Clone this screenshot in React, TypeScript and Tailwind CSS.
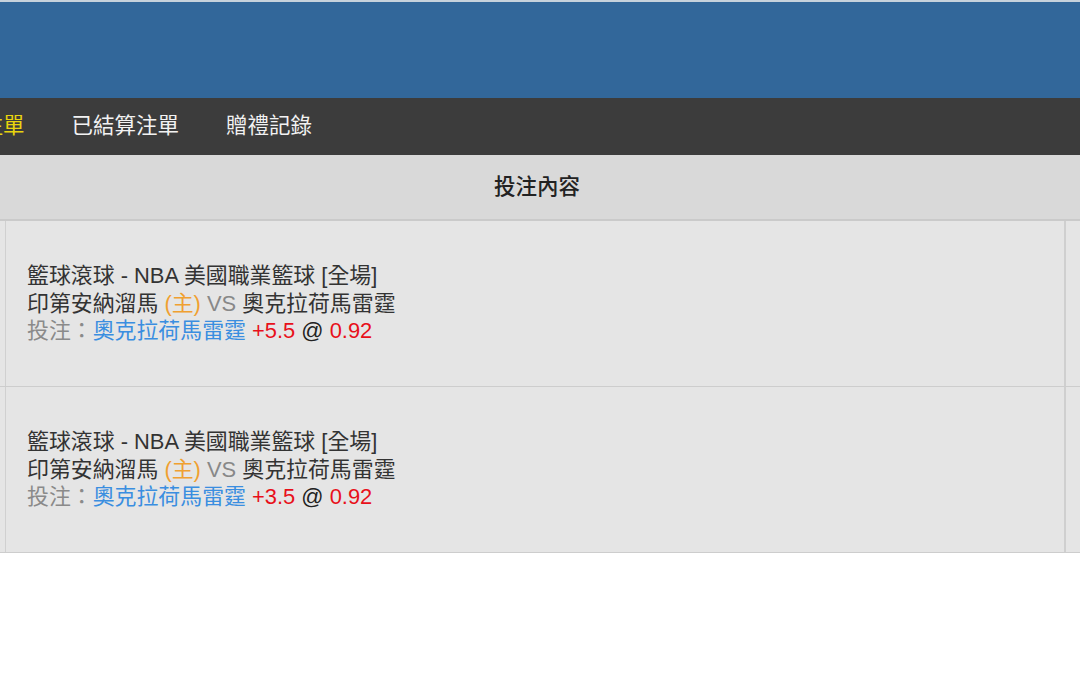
const font = { fontFamily: '"Liberation Sans", "Noto Sans CJK TC", sans-serif' };

const bets = [
  { line: '+5.5', odds: '0.92' },
  { line: '+3.5', odds: '0.92' },
];

function BetRow({ line, odds }: { line: string; odds: string }) {
  return (
    <div className="flex h-[166px] border-b border-[#cdcdcd] bg-[#e5e5e5]">
      <div className="w-[126px] shrink-0 border-r border-[#d0d0d0]" />
      <div className="flex w-[1060px] shrink-0 flex-col justify-center border-r-2 border-[#cfcfcf] pl-[21px] text-[21.9px] leading-[27.5px] text-[#333]">
        <div>籃球滾球 - NBA 美國職業籃球 [全場]</div>
        <div>
          印第安納溜馬 <span className="text-[#f0a030]">(主)</span>{' '}
          <span className="text-[#888]">VS</span> 奧克拉荷馬雷霆
        </div>
        <div>
          <span className="text-[#8a8a8a]">投注：</span>
          <span className="text-[#3a8ee0]">奧克拉荷馬雷霆</span>{' '}
          <span className="text-[#e8101a]">{line}</span>{' '}
          <span className="text-[#222]">@</span>{' '}
          <span className="text-[#e8101a]">{odds}</span>
        </div>
      </div>
      <div className="flex-1" />
    </div>
  );
}

export default function App() {
  return (
    <div className="h-[696px] w-[1080px] overflow-hidden bg-white" style={font}>
      <div className="h-[98px] border-t-2 border-[#c7d2dc] bg-[#32679a]" />
      <nav className="flex h-[57px] items-center gap-[47px] bg-[#3c3c3c] text-[21.5px] text-[#f2f2f2]">
        <span className="-ml-[83px] text-[#e8d40e]">未結算注單</span>
        <span>已結算注單</span>
        <span>贈禮記錄</span>
      </nav>
      <div className="-ml-[120px] w-[1400px]">
        <div className="flex h-[66px] border-b-2 border-[#cacaca] bg-[#d9d9d9]">
          <div className="w-[126px] shrink-0" />
          <div className="flex w-[1060px] shrink-0 items-center justify-center pl-[2px] text-[21.5px] font-medium text-[#222]">
            投注內容
          </div>
        </div>
        {bets.map((b, i) => (
          <BetRow key={i} line={b.line} odds={b.odds} />
        ))}
      </div>
    </div>
  );
}
